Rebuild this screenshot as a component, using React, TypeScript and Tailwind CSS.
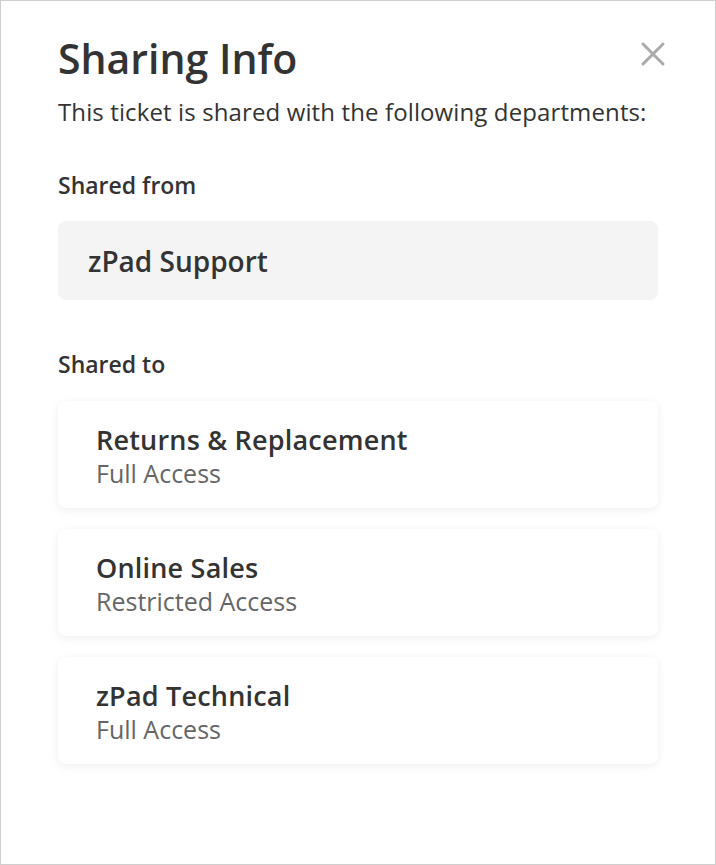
export default function App() {
  const shares = [
    { name: "Returns & Replacement", access: "Full Access" },
    { name: "Online Sales", access: "Restricted Access" },
    { name: "zPad Technical", access: "Full Access" },
  ];

  return (
    <div
      className="w-[716px] h-[865px] bg-white border border-[#cfcfcf] text-[#333]"
      style={{ fontFamily: "'Open Sans', Lato, sans-serif" }}
    >
      <div className="pl-[57px] pr-[57px] pt-[30px]">
        <div className="flex items-start justify-between">
          <h1 className="text-[41px] leading-[54px] font-semibold text-[#333]">
            Sharing Info
          </h1>
          <button className="mt-[10px] mr-[-8px] text-[#aaa]">
            <svg width="26" height="26" viewBox="0 0 26 26" fill="none">
              <path
                d="M3 3 L23 23 M23 3 L3 23"
                stroke="currentColor"
                strokeWidth="3"
                strokeLinecap="round"
              />
            </svg>
          </button>
        </div>
        <p className="mt-[12px] text-[24px] leading-[30px] text-[#333] tracking-[0.12px]">
          This ticket is shared with the following departments:
        </p>

        <h2 className="mt-[44px] text-[23px] leading-[28px] font-semibold">
          Shared from
        </h2>
        <div className="mt-[22px] h-[79px] rounded-lg bg-[#f4f4f4] flex items-center px-[30px]">
          <span className="text-[28px] font-semibold">zPad Support</span>
        </div>

        <h2 className="mt-[50px] text-[23px] leading-[28px] font-semibold">
          Shared to
        </h2>
        <div className="mt-[23px] flex flex-col gap-[21px]">
          {shares.map((s, i) => (
            <div
              key={i}
              className="h-[107px] rounded-lg bg-white shadow-[0_2px_10px_rgba(0,0,0,0.07)] px-[38px] pt-[21px]"
            >
              <div className="text-[27px] leading-[36px] font-semibold tracking-[0.2px]">
                {s.name}
              </div>
              <div className="text-[25px] leading-[30px] text-[#666]">
                {s.access}
              </div>
            </div>
          ))}
        </div>
      </div>
    </div>
  );
}
